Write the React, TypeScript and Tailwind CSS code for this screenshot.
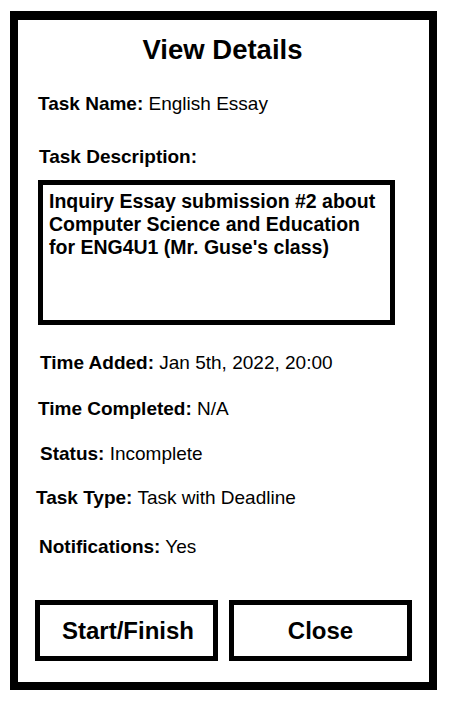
import React from 'react';

const font = { fontFamily: '"Liberation Sans", Arial, sans-serif' };

const Field = ({ label, value, className }: { label: string; value: string; className: string }) => (
    <div className={`h-5 leading-5 text-[19px] text-black whitespace-nowrap ${className}`}>
        <span className="font-bold">{label}</span> {value}
    </div>
);

const App = () => {
    return (
        <div className="w-[450px] h-[713px] bg-white" style={font}>
            <div className="ml-[10px] mt-[11px] w-[427px] h-[679px] border-[8px] border-t-[9px] border-black bg-white flex flex-col">
                {/* Title */}
                <h1 className="mt-[14px] h-8 leading-8 text-center text-[27.5px] font-bold text-black pr-[2px]">
                    View Details
                </h1>

                <Field label="Task Name:" value="English Essay" className="mt-[28px] ml-[20px]" />

                <div className="mt-[33px] ml-[21px] h-5 leading-5 text-[19px] font-bold text-black">
                    Task Description:
                </div>

                {/* Description box */}
                <div className="mt-[13px] ml-[20px] w-[357px] h-[145px] border-[5px] border-black px-[6px] py-[5px]">
                    <p className="text-[19.5px] leading-[23px] font-bold text-black">
                        Inquiry Essay submission #2 about Computer Science and Education for ENG4U1 (Mr. Guse's class)
                    </p>
                </div>

                <Field label="Time Added:" value="Jan 5th, 2022, 20:00" className="mt-[28px] ml-[22px]" />
                <Field label="Time Completed:" value="N/A" className="mt-[26px] ml-[20px]" />
                <Field label="Status:" value="Incomplete" className="mt-[25px] ml-[22px]" />
                <Field label="Task Type:" value="Task with Deadline" className="mt-[24px] ml-[18px]" />
                <Field label="Notifications:" value="Yes" className="mt-[29px] ml-[21px]" />

                {/* Buttons */}
                <div className="mt-[43px] ml-[17px] flex gap-[11px]">
                    <button className="w-[183px] h-[61px] border-[5px] border-black bg-white text-[24px] font-bold text-black pl-[3px]">
                        Start/Finish
                    </button>
                    <button className="w-[183px] h-[61px] border-[5px] border-black bg-white text-[24px] font-bold text-black">
                        Close
                    </button>
                </div>
            </div>
        </div>
    );
};

export default App;
